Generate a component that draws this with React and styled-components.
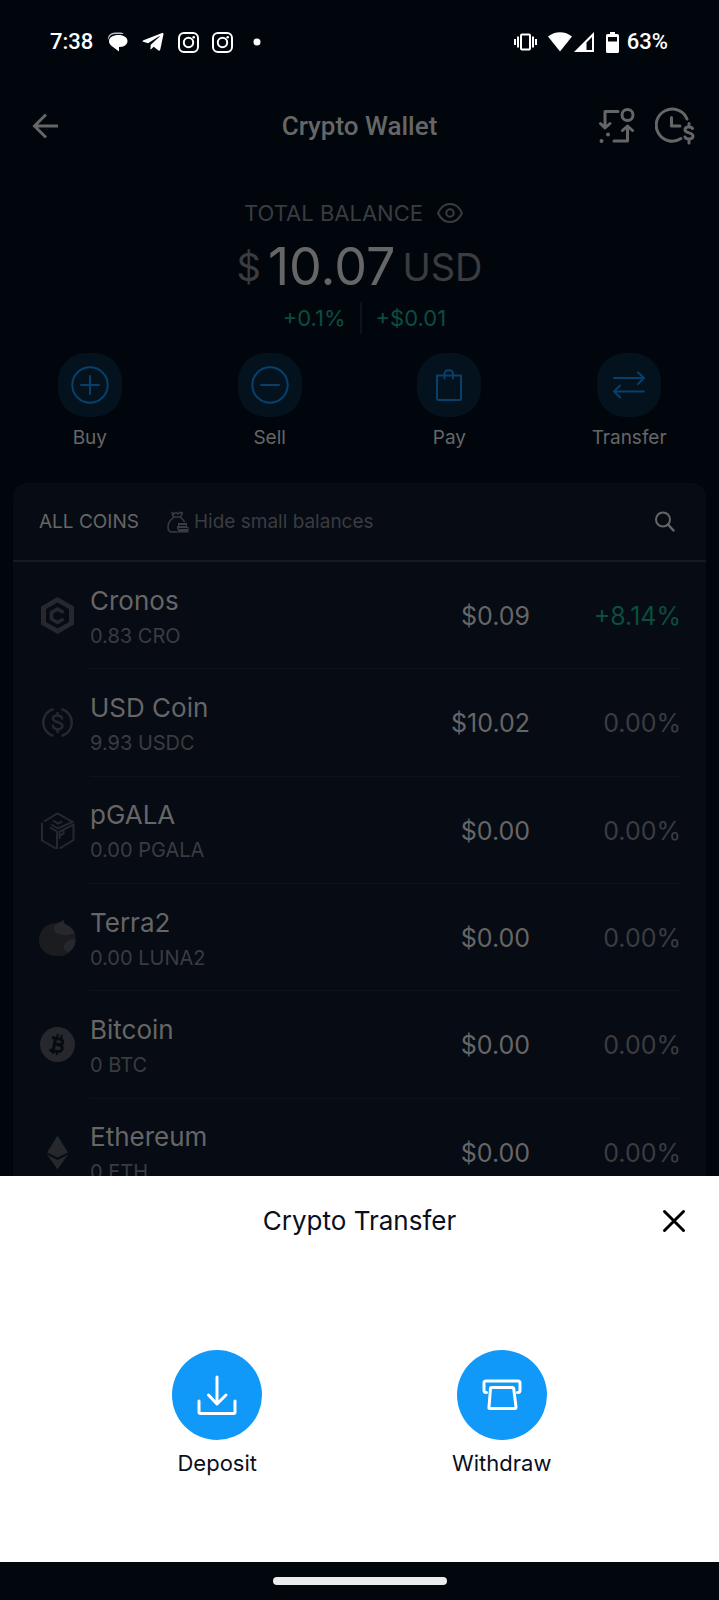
import React from "react";
import styled, { createGlobalStyle } from "styled-components";
import { FaTelegramPlane } from "react-icons/fa";

const color = {
  page: "#01060d",
  card: "#070b13",
  text: "#666666",
  muted: "#3a3c40",
  faint: "#26282d",
  line: "#0e1219",
  lineStrong: "#171a22",
  green: "#0c4d3f",
  blue: "#07406b",
  blueSoft: "#04121e",
  accent: "#1199fa",
  ink: "#0b0f1c",
};

const GlobalStyle = createGlobalStyle`
  * { box-sizing: border-box; }
  body { margin: 0; background: ${color.page}; }
  button { font: inherit; color: inherit; background: none; border: 0; padding: 0; cursor: pointer; }
  h1, h2, p, ul { margin: 0; padding: 0; font-weight: 400; }
  svg { display: block; flex: none; }
`;

const Screen = styled.div`
  height: 100vh;
  overflow: hidden;
  display: flex;
  flex-direction: column;
  background: ${color.page};
  color: ${color.text};
  font-family: Inter, "Liberation Sans", sans-serif;
`;

const StatusBar = styled.div`
  flex: none;
  height: 84px;
  display: flex;
  align-items: center;
  justify-content: space-between;
  padding: 0 51px 0 50px;
  color: #fff;
  font: 500 22px/28px Roboto, sans-serif;
`;

const StatusGroup = styled.div`
  display: flex;
  align-items: center;
  gap: ${(p) => p.$gap}px;
`;

const Header = styled.header`
  flex: none;
  height: 84px;
  display: grid;
  grid-template-columns: 100px 1fr 106px;
  align-items: center;
  padding: 0 24px 0 30px;
`;

const Title = styled.h1`
  text-align: center;
  font: 500 26px/32px Roboto, sans-serif;
`;

const HeaderActions = styled.div`
  display: flex;
  justify-content: flex-end;
  gap: 20px;
`;

const Balance = styled.section`
  flex: none;
  display: flex;
  flex-direction: column;
  align-items: center;
  padding-top: 30px;
`;

const BalanceLabel = styled.div`
  display: flex;
  align-items: center;
  gap: 14px;
  padding-right: 12px;
  font-size: 22px;
  line-height: 30px;
  color: ${color.muted};
`;

const Amount = styled.p`
  display: flex;
  align-items: center;
  gap: 7px;
  margin-top: 11px;
  font-size: 52px;
  line-height: 56px;
`;

const Unit = styled.span`
  font-size: 38px;
  color: ${color.muted};
`;

const Delta = styled.p`
  display: grid;
  grid-template-columns: 1fr 1fr;
  margin-top: 7px;
  font-size: 22px;
  line-height: 32px;
  color: ${color.green};
`;

const DeltaPart = styled.span`
  padding: 0 14px;
  text-align: right;
  & + & {
    border-left: 2px solid ${color.line};
    text-align: left;
  }
`;

const Actions = styled.nav`
  flex: none;
  display: grid;
  grid-template-columns: repeat(4, 1fr);
  margin-top: 19px;
`;

const Action = styled.button`
  display: flex;
  flex-direction: column;
  align-items: center;
  gap: 9px;
  font-size: 19px;
  line-height: 24px;
`;

const ActionBadge = styled.span`
  width: 64px;
  height: 64px;
  display: grid;
  place-items: center;
  border-radius: 28px;
  background: ${color.blueSoft};
  color: ${color.blue};
`;

const Card = styled.section`
  flex: 1;
  margin: 33px 13px 0;
  border-radius: 14px 14px 0 0;
  background: ${color.card};
`;

const CardHeader = styled.div`
  height: 79px;
  display: flex;
  align-items: center;
  padding: 0 31px 0 26px;
  border-bottom: 2px solid ${color.lineStrong};
  font-size: 19px;
  line-height: 24px;
`;

const HideToggle = styled.button`
  display: flex;
  align-items: center;
  gap: 5px;
  margin: 0 auto 0 28px;
  color: ${color.muted};
`;

const CoinList = styled.ul`
  height: 644px;
  display: grid;
  grid-template-rows: repeat(6, 1fr);
  padding: 0 25px 0 26px;
  list-style: none;
`;

const CoinRow = styled.li`
  display: grid;
  grid-template-columns: 37px 1fr;
  column-gap: 14px;
  align-items: center;
`;

const CoinIcon = styled.span`
  color: ${color.faint};
`;

const CoinBody = styled.div`
  height: 100%;
  display: grid;
  grid-template-columns: 1fr 150px 151px;
  align-items: center;
  padding-top: 2px;
  border-bottom: 1px solid ${color.line};
  font-size: 26px;
  line-height: 32px;
`;

const CoinAmount = styled.p`
  margin-top: 7px;
  font-size: 20px;
  line-height: 24px;
  color: ${color.muted};
`;

const Figure = styled.span`
  text-align: right;
  font-size: 25px;
  color: ${(p) => (p.$tone ? color[p.$tone] : "inherit")};
`;

const SheetLayer = styled.div`
  position: fixed;
  inset: auto 0 0 0;
`;

const Sheet = styled.section`
  padding-bottom: 85px;
  background: #fff;
  color: ${color.ink};
  font-family: Inter, "Liberation Sans", sans-serif;
`;

const SheetHeader = styled.div`
  height: 90px;
  display: grid;
  grid-template-columns: 60px 1fr 60px;
  align-items: center;
  padding: 0 33px;
`;

const SheetTitle = styled.h2`
  grid-column: 2;
  text-align: center;
  font-size: 26px;
  line-height: 32px;
`;

const CloseButton = styled.button`
  justify-self: end;
  color: #000;
`;

const SheetOptions = styled.div`
  display: grid;
  grid-template-columns: 1fr 1fr;
  padding: 84px 75px 0;
`;

const SheetOption = styled.button`
  display: flex;
  flex-direction: column;
  align-items: center;
  gap: 9px;
  font-size: 22px;
  line-height: 28px;
`;

const OptionBadge = styled.span`
  width: 90px;
  height: 90px;
  display: grid;
  place-items: center;
  border-radius: 50%;
  background: ${color.accent};
  color: #fff;
`;

const NavBar = styled.div`
  height: 38px;
  display: grid;
  place-items: center;
  background: #02070e;
`;

const NavHandle = styled.span`
  width: 174px;
  height: 8px;
  border-radius: 4px;
  background: #ececec;
`;

function Icon({ w, h = w, sw = 2, children }) {
  return (
    <svg
      width={w}
      height={h}
      viewBox={`0 0 ${w} ${h}`}
      fill="none"
      stroke="currentColor"
      strokeWidth={sw}
      strokeLinecap="round"
      strokeLinejoin="round"
      aria-hidden="true"
    >
      {children}
    </svg>
  );
}

const solid = { fill: "currentColor", stroke: "none" };

const ChatIcon = () => (
  <Icon w={21} h={20}>
    <path {...solid} opacity=".75" d="M1 8C0 4 4 .5 8 .5h5c2 0 3 .6 4 1.500H8C4 2 2 5 1 8Z" />
    <path {...solid} d="M11.500 3c5.300 0 9 2.400 9 6 0 3-2.500 5-5.500 5.700l-3 .3v4.500L5 14.300C3.300 13 2 11.500 2 9c0-3.600 4-6 9.500-6Z" />
  </Icon>
);

const InstagramIcon = () => (
  <Icon w={21}>
    <rect x="1" y="1" width="19" height="19" rx="5" />
    <circle cx="10.500" cy="10.500" r="4.700" />
    <circle {...solid} cx="15.700" cy="5.200" r="1.300" />
  </Icon>
);

const DotIcon = () => (
  <Icon w={8}>
    <circle {...solid} cx="4" cy="4" r="3.500" />
  </Icon>
);

const VibrateIcon = () => (
  <Icon w={23} h={18}>
    <rect x="7" y="1.500" width="9" height="15" rx="1" />
    <path strokeLinecap="butt" d="M4 3.500v11M19 3.500v11M1 6v6M22 6v6" />
  </Icon>
);

const WifiIcon = () => (
  <Icon w={24} h={20}>
    <path {...solid} d="M0 4.500C7-1.300 17-1.300 24 4.500L12 19.500Z" />
  </Icon>
);

const SignalIcon = () => (
  <Icon w={21} h={20}>
    <path {...solid} fillRule="evenodd" d="M0 20 20 0v20ZM12.500 10.500V18H18V5Z" />
  </Icon>
);

const BatteryIcon = () => (
  <Icon w={13} h={21}>
    <path {...solid} fillRule="evenodd" d="M4 0h5v2h2.500q1.500 0 1.500 1.500v16q0 1.500-1.500 1.500h-10Q0 21 0 19.500v-16Q0 2 1.500 2H4ZM2 5v4.500h9V5Z" />
  </Icon>
);

const BackIcon = () => (
  <Icon w={29} h={26} sw={3}>
    <path strokeLinecap="butt" strokeLinejoin="miter" d="M28 13H5M16 1.500 4.500 13 16 24.500" />
  </Icon>
);

const SwapRouteIcon = () => (
  <Icon w={36} h={36} sw={3}>
    <circle cx="28.500" cy="7" r="5.500" />
    <path d="M19 3.500H6V19M1.500 15.500 6 20l5-4.500M15 33h13.500V18M23.500 22.500l5-4.500 5 4.500" />
    <circle {...solid} cx="9" cy="26.500" r="2" />
    <circle {...solid} cx="2.500" cy="33" r="2" />
  </Icon>
);

const HistoryIcon = () => (
  <Icon w={40} h={38} sw={3}>
    <path d="M32 12A16 16 0 1 0 26 31.500M16.500 10.500V19H25" />
    <path d="M37.500 21.500c-1-2-7.500-2.500-7.500 1.200 0 4 8 2.300 8 6.300 0 3.700-7 3.700-8 1M34 16.500v3M34 32.500v3.500" />
  </Icon>
);

const EyeIcon = () => (
  <Icon w={26} h={20}>
    <path d="M1 10C3.500 4.500 8 1 13 1s9.500 3.500 12 9c-2.500 5.500-7 9-12 9S3.500 15.500 1 10Z" />
    <circle cx="13" cy="10" r="3.700" />
  </Icon>
);

const PlusIcon = () => (
  <Icon w={38}>
    <circle cx="19" cy="19" r="17.700" />
    <path d="M10 19h18M19 10v18" />
  </Icon>
);

const MinusIcon = () => (
  <Icon w={38}>
    <circle cx="19" cy="19" r="17.700" />
    <path d="M10 19h18" />
  </Icon>
);

const BagIcon = () => (
  <Icon w={28} h={34}>
    <path d="M2 7.500h24v23q0 1.500-1.500 1.500h-21Q2 32 2 30.500ZM9.500 10.500V6c0-5 8.500-5 8.500 0v4.500" />
  </Icon>
);

const TransferIcon = () => (
  <Icon w={34} h={28}>
    <path d="M2 7h30M26 1.500 32 7l-6 6M32 20.500H2M8 14.500l-6 6L8 26.500" />
  </Icon>
);

const MoneyBagIcon = () => (
  <Icon w={22} sw={1}>
    <path strokeWidth="1.500" d="M5 1.500 7 3l2-1.700L11 3l2-1.700L15.500 2 13.500 6h-7ZM6.500 6.500C3 9 1 12.500 1 16c0 3 1.500 5 4 5h5M13.500 6.500c1.500 1 3 2.500 3.800 4" />
    <path {...solid} d="M11 12h9v4h1.500v5.500H11v-3h-1V15h1Z" />
    <path stroke={color.card} d="M12.500 14.500h6M12 17.500h8" />
  </Icon>
);

const SearchIcon = () => (
  <Icon w={21}>
    <circle cx="9" cy="8.500" r="7" />
    <path strokeWidth="2.500" d="m14 13.500 5.500 6" />
  </Icon>
);

const CloseIcon = () => (
  <Icon w={24} sw={3}>
    <path d="m2.500 2.500 19 19M21.500 2.500l-19 19" />
  </Icon>
);

const DepositIcon = () => (
  <Icon w={40} sw={3}>
    <path d="M20 2v26M11.500 20l8.500 9 9-9M2 26v11q0 1.500 1.500 1.500h33q1.500 0 1.500-1.500V26" />
  </Icon>
);

const WithdrawIcon = () => (
  <Icon w={40} h={32} sw={3}>
    <path d="M4.500 13.500q-2.500 0-2.500-2V4q0-2 2-2h32q2 0 2 2v7.500q0 2-2.500 2" />
    <path d="M9.500 8.500h21q1 0 1.200 1L34 28q0 1.500-1 1.500H8q-1.500 0-1-1.500L8.500 9.500q0-1 1-1Z" />
  </Icon>
);

const CronosIcon = () => (
  <Icon w={37}>
    <path {...solid} fillRule="evenodd" d="M18.500 0 35 9.500v18L18.500 37 2 27.500v-18ZM18.500 5.500 7 12v13l11.500 6.500L30 25V12Z" />
    <path strokeLinecap="butt" strokeLinejoin="miter" strokeWidth="3.500" d="M24.500 15.500 18.500 12l-6 3.500v6.500l6 3.500 6-3.500" />
  </Icon>
);

const UsdCoinIcon = () => (
  <Icon w={37}>
    <path strokeLinecap="butt" strokeWidth="2.500" d="M14.500 5a14 14 0 0 0 0 27M22.500 5a14 14 0 0 1 0 27" />
    <path strokeWidth="2.500" d="M23 14.500c-.5-4-9-4-9 0 0 4.500 9.500 3 9.500 7.500 0 4.500-9.500 4-9.500-.500M18.500 9v2.500M18.500 25.500V28" />
  </Icon>
);

const GalaIcon = () => (
  <Icon w={37}>
    <path
      strokeLinecap="butt"
      strokeLinejoin="miter"
      d="M5 9.500 18.500 1.500 33.500 10l-14.500 6.500-7-4M14 8.500l5 3 4-2M3 11v17.500l15 8.500V19.500L11 15.500M20.500 36.500l14-8.500V12.500L20.500 19.500v7.500M20.500 24l4-2.500V18"
    />
  </Icon>
);

const TerraIcon = () => (
  <Icon w={37}>
    <path {...solid} fill="#1a1c20" d="M25 0q-1 3 1 4.500C33 8 37 13 36.500 20.500c0 10-8 17-18 17S-1 30.500 0 20.500C0 10.500 9 4 16 4q6-.5 9-4Z" />
    <path {...solid} d="M24.500 1c-2 2.500-6 3-9.500 6-1 5 3 9 9 9 6 .5 9-1 12-2C34 9.500 29 6.500 26 5q-2-1-1.500-4ZM27 23c3-2 7-3 9.500-3 0 6-2 10-7 13-5 0-6-7-2.500-10Z" />
  </Icon>
);

const BitcoinIcon = () => (
  <Icon w={37}>
    <circle {...solid} cx="18.500" cy="18.500" r="17.500" />
    <g stroke={color.card} strokeWidth="3" strokeLinecap="butt">
      <path d="M13 11.500l6.500 1.300c6.500 1.300 5 6.500-.5 5.700l-3.500-.7M18.500 18.500c7.500 1 5.500 8-.8 7l-7.200-1.500M16.500 12.500 14 25" />
      <path strokeWidth="2" d="m18 12 .9-4M22 13l.9-4M13.500 28l.9-4M17.500 29l.9-4" />
    </g>
  </Icon>
);

const EthereumIcon = () => (
  <Icon w={37}>
    <path {...solid} d="M18.500 1.500 29 18.500l-10.500 5-10.500-5ZM8 20.500l10.500 5.500L29 20.500 18.500 35.500Z" />
  </Icon>
);

const actions = [
  { label: "Buy", Glyph: PlusIcon },
  { label: "Sell", Glyph: MinusIcon },
  { label: "Pay", Glyph: BagIcon },
  { label: "Transfer", Glyph: TransferIcon },
];

const coins = [
  { name: "Cronos", amount: "0.83 CRO", price: "$0.09", change: "+8.14%", tone: "green", Glyph: CronosIcon },
  { name: "USD Coin", amount: "9.93 USDC", price: "$10.02", change: "0.00%", tone: "muted", Glyph: UsdCoinIcon },
  { name: "pGALA", amount: "0.00 PGALA", price: "$0.00", change: "0.00%", tone: "muted", Glyph: GalaIcon },
  { name: "Terra2", amount: "0.00 LUNA2", price: "$0.00", change: "0.00%", tone: "muted", Glyph: TerraIcon },
  { name: "Bitcoin", amount: "0 BTC", price: "$0.00", change: "0.00%", tone: "muted", Glyph: BitcoinIcon },
  { name: "Ethereum", amount: "0 ETH", price: "$0.00", change: "0.00%", tone: "muted", Glyph: EthereumIcon },
];

const sheetOptions = [
  { label: "Deposit", Glyph: DepositIcon },
  { label: "Withdraw", Glyph: WithdrawIcon },
];

export default function App() {
  return (
    <>
      <GlobalStyle />
      <Screen>
        <StatusBar>
          <StatusGroup $gap={20}>
            <StatusGroup $gap={14}>
              <span>7:38</span>
              <StatusGroup $gap={13}>
                <ChatIcon />
                <FaTelegramPlane size={24} />
                <InstagramIcon />
                <InstagramIcon />
              </StatusGroup>
            </StatusGroup>
            <DotIcon />
          </StatusGroup>
          <StatusGroup $gap={8}>
            <StatusGroup $gap={11}>
              <VibrateIcon />
              <StatusGroup $gap={2}>
                <WifiIcon />
                <SignalIcon />
              </StatusGroup>
              <BatteryIcon />
            </StatusGroup>
            <span>63%</span>
          </StatusGroup>
        </StatusBar>

        <Header>
          <button type="button" aria-label="Back">
            <BackIcon />
          </button>
          <Title>Crypto Wallet</Title>
          <HeaderActions>
            <button type="button" aria-label="Convert">
              <SwapRouteIcon />
            </button>
            <button type="button" aria-label="History">
              <HistoryIcon />
            </button>
          </HeaderActions>
        </Header>

        <Balance>
          <BalanceLabel>
            TOTAL BALANCE
            <button type="button" aria-label="Show or hide balance">
              <EyeIcon />
            </button>
          </BalanceLabel>
          <Amount>
            <Unit>$</Unit>
            <span>10.07</span>
            <Unit>USD</Unit>
          </Amount>
          <Delta>
            <DeltaPart>+0.1%</DeltaPart>
            <DeltaPart>+$0.01</DeltaPart>
          </Delta>
        </Balance>

        <Actions>
          {actions.map(({ label, Glyph }) => (
            <Action key={label} type="button">
              <ActionBadge>
                <Glyph />
              </ActionBadge>
              {label}
            </Action>
          ))}
        </Actions>

        <Card>
          <CardHeader>
            <span>ALL COINS</span>
            <HideToggle type="button" aria-pressed="false">
              <MoneyBagIcon />
              Hide small balances
            </HideToggle>
            <button type="button" aria-label="Search">
              <SearchIcon />
            </button>
          </CardHeader>
          <CoinList>
            {coins.map(({ name, amount, price, change, tone, Glyph }) => (
              <CoinRow key={name}>
                <CoinIcon>
                  <Glyph />
                </CoinIcon>
                <CoinBody>
                  <div>
                    <p>{name}</p>
                    <CoinAmount>{amount}</CoinAmount>
                  </div>
                  <Figure>{price}</Figure>
                  <Figure $tone={tone}>{change}</Figure>
                </CoinBody>
              </CoinRow>
            ))}
          </CoinList>
        </Card>
      </Screen>

      <SheetLayer>
        <Sheet role="dialog" aria-labelledby="sheet-title">
          <SheetHeader>
            <SheetTitle id="sheet-title">Crypto Transfer</SheetTitle>
            <CloseButton type="button" aria-label="Close">
              <CloseIcon />
            </CloseButton>
          </SheetHeader>
          <SheetOptions>
            {sheetOptions.map(({ label, Glyph }) => (
              <SheetOption key={label} type="button">
                <OptionBadge>
                  <Glyph />
                </OptionBadge>
                {label}
              </SheetOption>
            ))}
          </SheetOptions>
        </Sheet>
        <NavBar>
          <NavHandle />
        </NavBar>
      </SheetLayer>
    </>
  );
}
